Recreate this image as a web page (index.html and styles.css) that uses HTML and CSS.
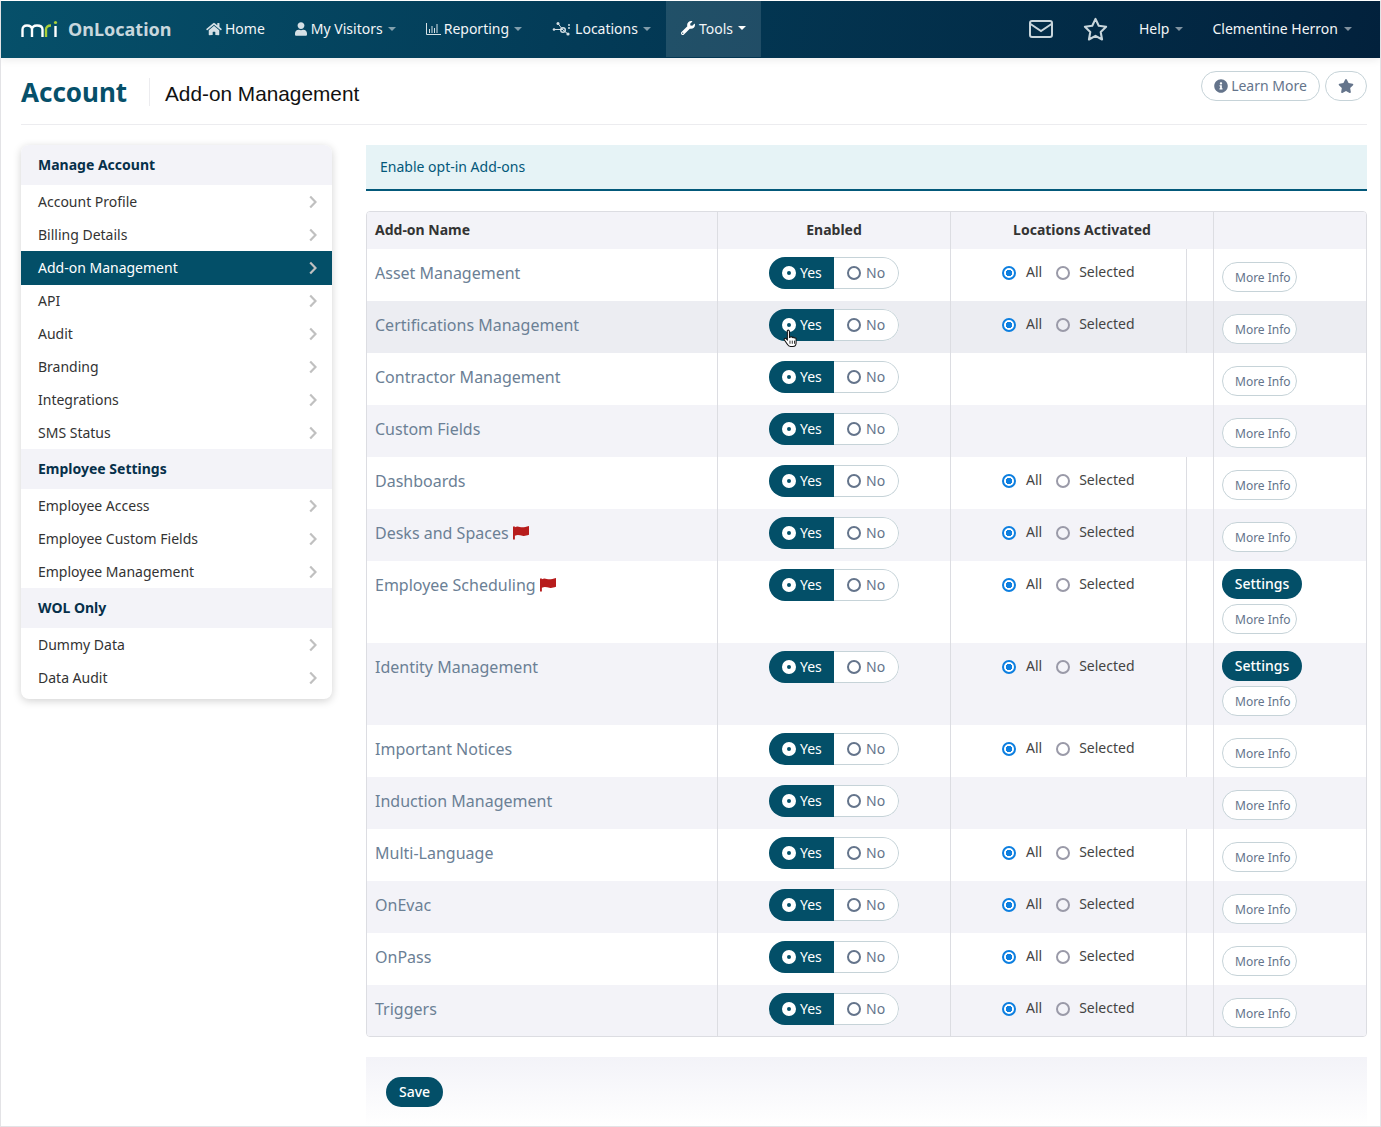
FILE: index.html
```html
<!DOCTYPE html>
<html lang="en">
<head>
    <meta charset="UTF-8">
    <title>Account - Add-on Management</title>
    <link rel="stylesheet" href="styles.css">
</head>
<body>
    <!-- Icon sprites -->
    <svg class="sprites" xmlns="http://www.w3.org/2000/svg">
        <symbol id="i-home" viewBox="0 0 576 512"><path d="M280.37 148.26L96 300.11V464a16 16 0 0 0 16 16l112.06-.29a16 16 0 0 0 15.92-16V368a16 16 0 0 1 16-16h64a16 16 0 0 1 16 16v95.64a16 16 0 0 0 16 16.05L464 480a16 16 0 0 0 16-16V300L295.67 148.26a12.19 12.19 0 0 0-15.3 0zM571.6 251.47L488 182.56V44.05a12 12 0 0 0-12-12h-56a12 12 0 0 0-12 12v72.61L318.47 43a48 48 0 0 0-61 0L4.34 251.47a12 12 0 0 0-1.6 16.9l25.5 31A12 12 0 0 0 45.15 301l235.22-193.74a12.19 12.19 0 0 1 15.3 0L530.9 301a12 12 0 0 0 16.9-1.6l25.5-31a12 12 0 0 0-1.7-16.93z"/></symbol>
        <symbol id="i-user" viewBox="0 0 448 512"><path d="M224 256c70.7 0 128-57.3 128-128S294.7 0 224 0 96 57.3 96 128s57.3 128 128 128zm89.6 32h-16.7c-22.2 10.2-46.9 16-72.9 16s-50.6-5.8-72.9-16h-16.7C60.2 288 0 348.2 0 422.4V464c0 26.5 21.5 48 48 48h352c26.5 0 48-21.5 48-48v-41.6c0-74.2-60.2-134.4-134.4-134.4z"/></symbol>
        <symbol id="i-chart" viewBox="0 0 15 12"><path d="M.5 0v11.500H15" fill="none" stroke="currentColor"/><path d="M3 6h1v4H3zM5.500 3h1v7h-1zM8 5h1v5H8zM10.500 1h1v9h-1z"/></symbol>
        <symbol id="i-network" viewBox="0 0 19 15"><path d="M2 8.500h9M6 2.500l5 6.500 5 4" fill="none" stroke="currentColor"/><circle cx="2" cy="8.500" r="1.300"/><circle cx="6" cy="2.500" r="1.500"/><circle cx="11" cy="9" r="2.300" fill="none" stroke="currentColor" stroke-width="1.400"/><circle cx="16" cy="13" r="1.600"/><circle cx="17" cy="4" r="1"/><circle cx="17" cy="7" r="1"/></symbol>
        <symbol id="i-wrench" viewBox="0 0 512 512"><path d="M507.73 109.1c-2.24-9.03-13.54-12.09-20.12-5.51l-74.36 74.36-67.88-11.31-11.31-67.88 74.36-74.36c6.62-6.62 3.43-17.9-5.66-20.16-47.38-11.74-99.55.91-136.58 37.93-39.64 39.64-50.55 97.1-34.05 147.2L18.74 402.76c-24.99 24.99-24.99 65.51 0 90.5 24.99 24.99 65.51 24.99 90.5 0l213.21-213.21c50.12 16.71 107.47 5.68 147.37-34.22 37.07-37.07 49.7-89.32 37.91-136.73zM64 472c-13.25 0-24-10.75-24-24 0-13.26 10.75-24 24-24s24 10.74 24 24c0 13.25-10.75 24-24 24z"/></symbol>
        <symbol id="i-star" viewBox="0 0 576 512"><path d="M259.3 17.8L194 150.2 47.9 171.5c-26.2 3.8-36.7 36.1-17.7 54.6l105.7 103-25 145.5c-4.5 26.3 23.2 46 46.4 33.7L288 439.6l130.7 68.7c23.2 12.2 50.9-7.4 46.4-33.7l-25-145.5 105.7-103c19-18.5 8.5-50.8-17.7-54.6L382 150.2 316.7 17.8c-11.7-23.6-45.6-23.9-57.4 0z"/></symbol>
        <symbol id="i-info" viewBox="0 0 512 512"><path d="M256 8C119.043 8 8 119.083 8 256c0 136.997 111.043 248 248 248s248-111.003 248-248C504 119.083 392.957 8 256 8zm0 110c23.196 0 42 18.804 42 42s-18.804 42-42 42-42-18.804-42-42 18.804-42 42-42zm56 254c0 6.627-5.373 12-12 12h-88c-6.627 0-12-5.373-12-12v-24c0-6.627 5.373-12 12-12h12v-64h-12c-6.627 0-12-5.373-12-12v-24c0-6.627 5.373-12 12-12h64c6.627 0 12 5.373 12 12v100h12c6.627 0 12 5.373 12 12v24z"/></symbol>
        <symbol id="i-chevron" viewBox="0 0 8 14"><path d="M1.200 1.500L6.500 7l-5.300 5.500" fill="none" stroke="currentColor" stroke-width="2.200"/></symbol>
        <symbol id="i-flag" viewBox="0 0 17 15"><path d="M0 1h2v14H0zM2 2c3-2 5 0 8 0 2 0 4-1 7-1.500V10c-3 1-5 1.500-7 1-3-.500-5-1.500-8 0z"/></symbol>
    </svg>

    <div class="page">
        <!-- Top navigation -->
        <header class="topbar">
            <a class="brand">
                <svg class="brand-logo" viewBox="0 0 37 18">
                    <path d="M1.500 17V9.500C1.500 7 3 5.500 6 5.500s5 1.500 5 4V17M11 9.500C11 7 12.500 5.500 16 5.500s5.500 1.500 5.500 4V17" fill="none" stroke="#fff" stroke-width="2.400"/>
                    <path d="M25 17V9.500C25 7 26.500 5.500 30 5.500" fill="none" stroke="#a9cf38" stroke-width="2.400"/>
                    <path d="M34.500 6v11" fill="none" stroke="#fff" stroke-width="2.400"/>
                    <circle cx="34.500" cy="2.500" r="1.600" fill="#a9cf38"/>
                </svg>
                <span class="brand-name">OnLocation</span>
            </a>
            <nav class="nav">
                <a class="nav-item"><svg class="nav-icon icon-home"><use href="#i-home"/></svg>Home</a>
                <a class="nav-item"><svg class="nav-icon icon-user"><use href="#i-user"/></svg>My Visitors<span class="caret"></span></a>
                <a class="nav-item"><svg class="nav-icon icon-chart"><use href="#i-chart"/></svg>Reporting<span class="caret"></span></a>
                <a class="nav-item"><svg class="nav-icon icon-network"><use href="#i-network"/></svg>Locations<span class="caret"></span></a>
                <a class="nav-item active"><svg class="nav-icon icon-wrench"><use href="#i-wrench"/></svg>Tools<span class="caret"></span></a>
            </nav>
            <div class="nav nav-right">
                <a class="nav-item">
                    <svg class="mail-icon" viewBox="0 0 24 18"><rect x="1" y="1" width="22" height="16" rx="2" fill="none" stroke="currentColor" stroke-width="2"/><path d="M1.500 4l10.500 7 10.500-7" fill="none" stroke="currentColor" stroke-width="2"/></svg>
                </a>
                <a class="nav-item">
                    <svg class="star-icon" viewBox="0 0 24 23"><path d="M12 1.800l3.100 6.600 7.100 1-5.200 5 1.300 7.200-6.300-3.500-6.300 3.500L7 14.400l-5.200-5 7.100-1z" fill="none" stroke="currentColor" stroke-width="2" stroke-linejoin="round"/></svg>
                </a>
                <a class="nav-item help-item">Help<span class="caret"></span></a>
                <a class="nav-item">Clementine Herron<span class="caret"></span></a>
            </div>
        </header>

        <div class="content">
            <!-- Page title -->
            <div class="title-row">
                <h1>Account</h1>
                <h2>Add-on Management</h2>
                <div class="title-actions">
                    <a class="outline-btn learn-btn"><svg class="info-icon"><use href="#i-info"/></svg>Learn More</a>
                    <a class="outline-btn fav-btn"><svg class="fav-icon"><use href="#i-star"/></svg></a>
                </div>
            </div>

            <div class="columns">
                <!-- Side menu -->
                <aside class="sidemenu">
                    <div class="menu-head">Manage Account</div>
                    <a class="menu-item">Account Profile<svg class="chevron"><use href="#i-chevron"/></svg></a>
                    <a class="menu-item">Billing Details<svg class="chevron"><use href="#i-chevron"/></svg></a>
                    <a class="menu-item current">Add-on Management<svg class="chevron"><use href="#i-chevron"/></svg></a>
                    <a class="menu-item">API<svg class="chevron"><use href="#i-chevron"/></svg></a>
                    <a class="menu-item">Audit<svg class="chevron"><use href="#i-chevron"/></svg></a>
                    <a class="menu-item">Branding<svg class="chevron"><use href="#i-chevron"/></svg></a>
                    <a class="menu-item">Integrations<svg class="chevron"><use href="#i-chevron"/></svg></a>
                    <a class="menu-item">SMS Status<svg class="chevron"><use href="#i-chevron"/></svg></a>
                    <div class="menu-head">Employee Settings</div>
                    <a class="menu-item">Employee Access<svg class="chevron"><use href="#i-chevron"/></svg></a>
                    <a class="menu-item">Employee Custom Fields<svg class="chevron"><use href="#i-chevron"/></svg></a>
                    <a class="menu-item">Employee Management<svg class="chevron"><use href="#i-chevron"/></svg></a>
                    <div class="menu-head">WOL Only</div>
                    <a class="menu-item">Dummy Data<svg class="chevron"><use href="#i-chevron"/></svg></a>
                    <a class="menu-item">Data Audit<svg class="chevron"><use href="#i-chevron"/></svg></a>
                </aside>

                <main class="main">
                    <div class="banner">Enable opt-in Add-ons</div>

                    <div class="table-wrap">
                        <table class="addons">
                            <colgroup>
                                <col class="col-name"><col class="col-enabled"><col class="col-loc"><col class="col-gap"><col class="col-actions">
                            </colgroup>
                            <thead>
                                <tr>
                                    <th class="th-name">Add-on Name</th>
                                    <th>Enabled</th>
                                    <th colspan="2">Locations Activated</th>
                                    <th></th>
                                </tr>
                            </thead>
                            <tbody>
                                <tr>
                                    <td class="name">Asset Management</td>
                                    <td><div class="toggle"><span class="toggle-yes"><i class="dot"></i>Yes</span><span class="toggle-no"><i class="ring"></i>No</span></div></td>
                                    <td class="loc"><span class="radio on"></span><span class="radio-label">All</span><span class="radio"></span><span class="radio-label">Selected</span></td>
                                    <td></td>
                                    <td class="actions"><a class="more-btn">More Info</a></td>
                                </tr>
                                <tr class="hovered">
                                    <td class="name">Certifications Management</td>
                                    <td class="cursor-cell"><div class="toggle"><span class="toggle-yes"><i class="dot"></i>Yes</span><span class="toggle-no"><i class="ring"></i>No</span></div>
                                        <svg class="hand" viewBox="0 0 14 18"><path d="M4 1.500c.8-.8 2-.5 2 .8V8l1-.5c.8-.4 1.500 0 1.700.5.800-.5 1.600-.2 1.800.5.800-.4 1.800 0 1.800 1v3.500c0 2-1.300 3.500-3 3.500H7c-1.500 0-2.300-.8-3-2L1.200 10.500c-.6-1 .5-2.200 1.500-1.500L4 10.200z" fill="#fff" stroke="#111" stroke-width="1"/><path d="M6.500 11v3M8.700 11v3M10.800 11v3" stroke="#111" stroke-width=".8"/></svg>
                                    </td>
                                    <td class="loc"><span class="radio on"></span><span class="radio-label">All</span><span class="radio"></span><span class="radio-label">Selected</span></td>
                                    <td></td>
                                    <td class="actions"><a class="more-btn">More Info</a></td>
                                </tr>
                                <tr>
                                    <td class="name">Contractor Management</td>
                                    <td><div class="toggle"><span class="toggle-yes"><i class="dot"></i>Yes</span><span class="toggle-no"><i class="ring"></i>No</span></div></td>
                                    <td colspan="2"></td>
                                    <td class="actions"><a class="more-btn">More Info</a></td>
                                </tr>
                                <tr>
                                    <td class="name">Custom Fields</td>
                                    <td><div class="toggle"><span class="toggle-yes"><i class="dot"></i>Yes</span><span class="toggle-no"><i class="ring"></i>No</span></div></td>
                                    <td colspan="2"></td>
                                    <td class="actions"><a class="more-btn">More Info</a></td>
                                </tr>
                                <tr>
                                    <td class="name">Dashboards</td>
                                    <td><div class="toggle"><span class="toggle-yes"><i class="dot"></i>Yes</span><span class="toggle-no"><i class="ring"></i>No</span></div></td>
                                    <td class="loc"><span class="radio on"></span><span class="radio-label">All</span><span class="radio"></span><span class="radio-label">Selected</span></td>
                                    <td></td>
                                    <td class="actions"><a class="more-btn">More Info</a></td>
                                </tr>
                                <tr>
                                    <td class="name">Desks and Spaces <svg class="flag"><use href="#i-flag"/></svg></td>
                                    <td><div class="toggle"><span class="toggle-yes"><i class="dot"></i>Yes</span><span class="toggle-no"><i class="ring"></i>No</span></div></td>
                                    <td class="loc"><span class="radio on"></span><span class="radio-label">All</span><span class="radio"></span><span class="radio-label">Selected</span></td>
                                    <td></td>
                                    <td class="actions"><a class="more-btn">More Info</a></td>
                                </tr>
                                <tr>
                                    <td class="name">Employee Scheduling <svg class="flag"><use href="#i-flag"/></svg></td>
                                    <td><div class="toggle"><span class="toggle-yes"><i class="dot"></i>Yes</span><span class="toggle-no"><i class="ring"></i>No</span></div></td>
                                    <td class="loc"><span class="radio on"></span><span class="radio-label">All</span><span class="radio"></span><span class="radio-label">Selected</span></td>
                                    <td></td>
                                    <td class="actions stacked"><a class="settings-btn">Settings</a><a class="more-btn">More Info</a></td>
                                </tr>
                                <tr>
                                    <td class="name">Identity Management</td>
                                    <td><div class="toggle"><span class="toggle-yes"><i class="dot"></i>Yes</span><span class="toggle-no"><i class="ring"></i>No</span></div></td>
                                    <td class="loc"><span class="radio on"></span><span class="radio-label">All</span><span class="radio"></span><span class="radio-label">Selected</span></td>
                                    <td></td>
                                    <td class="actions stacked"><a class="settings-btn">Settings</a><a class="more-btn">More Info</a></td>
                                </tr>
                                <tr>
                                    <td class="name">Important Notices</td>
                                    <td><div class="toggle"><span class="toggle-yes"><i class="dot"></i>Yes</span><span class="toggle-no"><i class="ring"></i>No</span></div></td>
                                    <td class="loc"><span class="radio on"></span><span class="radio-label">All</span><span class="radio"></span><span class="radio-label">Selected</span></td>
                                    <td></td>
                                    <td class="actions"><a class="more-btn">More Info</a></td>
                                </tr>
                                <tr>
                                    <td class="name">Induction Management</td>
                                    <td><div class="toggle"><span class="toggle-yes"><i class="dot"></i>Yes</span><span class="toggle-no"><i class="ring"></i>No</span></div></td>
                                    <td colspan="2"></td>
                                    <td class="actions"><a class="more-btn">More Info</a></td>
                                </tr>
                                <tr>
                                    <td class="name">Multi-Language</td>
                                    <td><div class="toggle"><span class="toggle-yes"><i class="dot"></i>Yes</span><span class="toggle-no"><i class="ring"></i>No</span></div></td>
                                    <td class="loc"><span class="radio on"></span><span class="radio-label">All</span><span class="radio"></span><span class="radio-label">Selected</span></td>
                                    <td></td>
                                    <td class="actions"><a class="more-btn">More Info</a></td>
                                </tr>
                                <tr>
                                    <td class="name">OnEvac</td>
                                    <td><div class="toggle"><span class="toggle-yes"><i class="dot"></i>Yes</span><span class="toggle-no"><i class="ring"></i>No</span></div></td>
                                    <td class="loc"><span class="radio on"></span><span class="radio-label">All</span><span class="radio"></span><span class="radio-label">Selected</span></td>
                                    <td></td>
                                    <td class="actions"><a class="more-btn">More Info</a></td>
                                </tr>
                                <tr>
                                    <td class="name">OnPass</td>
                                    <td><div class="toggle"><span class="toggle-yes"><i class="dot"></i>Yes</span><span class="toggle-no"><i class="ring"></i>No</span></div></td>
                                    <td class="loc"><span class="radio on"></span><span class="radio-label">All</span><span class="radio"></span><span class="radio-label">Selected</span></td>
                                    <td></td>
                                    <td class="actions"><a class="more-btn">More Info</a></td>
                                </tr>
                                <tr>
                                    <td class="name">Triggers</td>
                                    <td><div class="toggle"><span class="toggle-yes"><i class="dot"></i>Yes</span><span class="toggle-no"><i class="ring"></i>No</span></div></td>
                                    <td class="loc"><span class="radio on"></span><span class="radio-label">All</span><span class="radio"></span><span class="radio-label">Selected</span></td>
                                    <td></td>
                                    <td class="actions"><a class="more-btn">More Info</a></td>
                                </tr>
                            </tbody>
                        </table>
                    </div>

                    <div class="form-footer"><a class="save-btn">Save</a></div>
                </main>
            </div>
        </div>
    </div>
</body>
</html>
```

FILE: styles.css
```css
/* Basic Styles */
* {
    box-sizing: border-box;
}

html, body {
    margin: 0;
    padding: 0;
}

body {
    font-family: "Noto Sans", "Open Sans", sans-serif;
    font-size: 14px;
    color: #333;
    background-color: #fff;
}

.sprites {
    display: none;
}

svg {
    fill: currentColor;
}

.page {
    height: 1127px;
    overflow: hidden;
    border: 1px solid #e3e3e6;
    border-top: 1px solid #fff;
    border-bottom: 1px solid #e3e3e6;
}

/* Top Navigation */
.topbar {
    display: flex;
    height: 57px;
    color: #fff;
    background: linear-gradient(100deg, #06506a 0%, #033c58 40%, #02213c 100%);
    box-shadow: 0 2px 8px rgba(0, 0, 0, 0.08);
}

.brand {
    display: flex;
    align-items: center;
    width: 190px;
    padding-left: 20px;
    padding-bottom: 2px;
}

.brand-logo {
    width: 37px;
    height: 18px;
}

.brand-name {
    margin-left: 10px;
    font-size: 18px;
    font-weight: 700;
    color: #c8d7dd;
}

.nav {
    display: flex;
}

.nav-right {
    margin-left: auto;
    margin-right: 13px;
}

.nav-item {
    display: flex;
    align-items: center;
    padding: 0 15px 2px;
    color: #f2f5f7;
}

.nav-item.active {
    height: 56px;
    background-color: rgba(255, 255, 255, 0.12);
}

.nav-icon {
    color: #d5e0e5;
}

.icon-home { width: 16px; height: 14px; margin-right: 3px; }
.icon-user { width: 12px; height: 14px; margin-right: 4px; }
.icon-chart { width: 15px; height: 12px; margin-right: 3px; }
.icon-network { width: 19px; height: 15px; margin-right: 4px; }
.icon-wrench { width: 14px; height: 14px; margin-right: 4px; color: #fff; }

.caret {
    width: 0;
    height: 0;
    margin-left: 5px;
    border-top: 4px solid rgba(255, 255, 255, 0.5);
    border-left: 4px solid transparent;
    border-right: 4px solid transparent;
}

.nav-right .caret {
    margin-left: 6px;
}

.help-item {
    padding-left: 16px;
    margin-right: -1px;
}

.active .caret {
    border-top-color: #fff;
}

.mail-icon {
    width: 24px;
    height: 18px;
    color: #c8d5db;
    fill: none;
}

.star-icon {
    width: 25px;
    height: 24px;
    color: #c8d5db;
    fill: none;
}

/* Page Title */
.content {
    padding: 0 13px 0 20px;
}

.title-row {
    display: flex;
    align-items: flex-start;
    height: 67px;
    border-bottom: 1px solid #ececef;
}

h1 {
    margin: 14px 0 0;
    width: 128px;
    font-size: 26px;
    line-height: 40px;
    font-weight: 700;
    color: #06506a;
}

h2 {
    margin: 20px 0 0;
    padding-left: 15px;
    height: 28px;
    border-left: 1px solid #ececef;
    font-family: "Liberation Sans", Arial, sans-serif;
    font-size: 20.800px;
    line-height: 32px;
    font-weight: 400;
    color: #111;
}

.title-actions {
    display: flex;
    gap: 5px;
    margin-left: auto;
    margin-top: 13px;
}

.outline-btn {
    display: flex;
    align-items: center;
    justify-content: center;
    height: 30px;
    padding-bottom: 1px;
    border: 1px solid #c6d3d8;
    border-radius: 15px;
    color: #64748b;
}

.learn-btn {
    width: 119px;
}

.fav-btn {
    width: 42px;
}

.info-icon {
    width: 14px;
    height: 14px;
    margin-right: 3px;
}

.fav-icon {
    width: 16px;
    height: 14px;
}

/* Columns */
.columns {
    display: grid;
    grid-template-columns: 311px 1001px;
    gap: 34px;
    margin-top: 20px;
}

/* Side Menu */
.sidemenu {
    align-self: start;
    padding-bottom: 5px;
    border-radius: 8px;
    background-color: #fff;
    overflow: hidden;
    box-shadow: 0 2px 8px rgba(0, 0, 0, 0.18);
}

.menu-head {
    height: 40px;
    padding-left: 17px;
    line-height: 40px;
    font-weight: 700;
    color: #06304a;
    background-color: #f3f3f8;
}

.menu-item {
    display: flex;
    align-items: center;
    justify-content: space-between;
    height: 33px;
    padding: 0 15px 0 17px;
    color: #333;
}

.menu-item.current {
    height: 34px;
    margin-bottom: -1px;
    padding-bottom: 1px;
    color: #fff;
    background-color: #034f68;
}

.chevron {
    width: 8px;
    height: 14px;
    color: #c0c0c0;
}

/* Banner */
.banner {
    height: 46px;
    padding-left: 14px;
    line-height: 44px;
    color: #03587a;
    background-color: #e6f3f6;
    border-bottom: 2px solid #03597a;
}

/* Add-on Table */
.table-wrap {
    margin-top: 20px;
    border: 1px solid #dcdde2;
    border-radius: 4px;
    overflow: hidden;
}

.addons {
    width: 999px;
    table-layout: fixed;
    border-collapse: separate;
    border-spacing: 0;
}

.col-name { width: 351px; }
.col-enabled { width: 233px; }
.col-loc { width: 236px; }
.col-gap { width: 27px; }
.col-actions { width: 152px; }

.addons th {
    height: 37px;
    padding: 0 0 2px;
    font-weight: 700;
    color: #333;
    text-align: center;
    background-color: #f3f3f8;
    border-right: 1px solid #dcdde2;
}

.addons th:last-child,
.addons td:last-child {
    border-right: none;
}

.addons .th-name {
    padding-left: 8px;
    text-align: left;
}

.addons td {
    height: 52px;
    padding: 8px 0 0;
    vertical-align: top;
    border-right: 1px solid #dcdde2;
}

.addons tbody tr:last-child td {
    height: 51px;
}

.addons tbody tr:nth-child(even) td {
    background-color: #f3f3f8;
}

.addons tbody tr.hovered td {
    background-color: #ecedf2;
}

.addons td.name {
    padding: 12px 8px 0;
    font-size: 16px;
    line-height: 24px;
    color: #6b8095;
}

.flag {
    width: 16px;
    height: 15px;
    vertical-align: -1px;
    color: #b71c1c;
}

/* Yes / No Toggle */
.toggle {
    display: flex;
    width: 130px;
    height: 32px;
    margin: 0 auto;
    border-radius: 16px;
    overflow: hidden;
    background-color: #fff;
}

.toggle-yes,
.toggle-no {
    display: flex;
    align-items: center;
    padding-bottom: 2px;
}

.toggle-yes {
    width: 65px;
    padding-left: 13px;
    color: #fff;
    background-color: #034f68;
}

.toggle-no {
    flex: 1;
    padding-left: 13px;
    color: #64748b;
    border: 1px solid #c6d3d8;
    border-left: none;
    border-radius: 0 16px 16px 0;
}

.dot,
.ring {
    width: 14px;
    height: 14px;
    margin-top: 2px;
    margin-right: 5px;
    border-radius: 50%;
}

.dot {
    margin-right: 4px;
    border: 5px solid #fff;
    background-color: #034f68;
}

.ring {
    border: 2px solid #64748b;
}

.cursor-cell {
    position: relative;
}

.hand {
    position: absolute;
    left: 65px;
    top: 28px;
    width: 15px;
    height: 19px;
}

/* Location Radios */
.addons td.loc {
    padding: 8px 0 0 51px;
    line-height: 32px;
    white-space: nowrap;
}

.loc > span {
    display: inline-block;
    vertical-align: middle;
}

.radio {
    width: 14px;
    height: 14px;
    margin-top: -2px;
    border: 2px solid #9a9aa8;
    border-radius: 50%;
}

.radio.on {
    border: 2px solid #0d7fe0;
    background: radial-gradient(circle, #0d7fe0 0 3px, #fff 3.500px);
}

.radio-label {
    margin: -4px 14px 0 10px;
    color: #444;
}

.radio-label:last-child {
    margin-left: 9px;
}

/* Buttons */
.addons td.actions {
    padding: 13px 0 0 8px;
}

.addons td.actions.stacked {
    height: 82px;
    padding-top: 8px;
}

.more-btn,
.settings-btn,
.save-btn {
    display: block;
    height: 30px;
    border-radius: 15px;
}

.more-btn {
    width: 75px;
    padding-left: 12px;
    font-size: 12px;
    line-height: 29px;
    color: #64748b;
    background-color: #fff;
    border: 1px solid #c6d3d8;
}

.settings-btn {
    width: 80px;
    margin-bottom: 5px;
    text-align: center;
    line-height: 29px;
    font-weight: 500;
    color: #fff;
    background-color: #034f68;
}

/* Footer */
.form-footer {
    height: 70px;
    margin-top: 20px;
    padding: 20px 20px 0;
    background: linear-gradient(#f3f3f8, #fff);
}

.save-btn {
    width: 57px;
    text-align: center;
    line-height: 29px;
    font-weight: 500;
    color: #fff;
    background-color: #034f68;
}
```
